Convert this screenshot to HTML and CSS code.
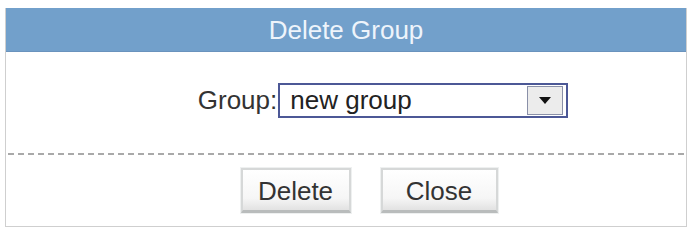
FILE: index.html
```html
<!DOCTYPE html>
<html lang="en">
<head>
    <meta charset="UTF-8">
    <title>Delete Group</title>
    <link rel="stylesheet" href="styles.css">
</head>
<body>
    <div class="dialog">
        <div class="dialog-title">Delete Group</div>

        <div class="form-row">
            <label class="form-label" for="group">Group:</label>
            <div class="select-box" id="group">
                <span class="select-value">new group</span>
                <span class="select-btn">
                    <svg width="12" height="7" viewBox="0 0 12 7"><path d="M0 0 H12 L6 7 Z" fill="#111"/></svg>
                </span>
            </div>
        </div>

        <div class="divider"></div>

        <div class="actions">
            <button class="btn btn-delete">Delete</button>
            <button class="btn btn-close">Close</button>
        </div>
    </div>
</body>
</html>
```

FILE: styles.css
```css
* {
    margin: 0;
    padding: 0;
    box-sizing: border-box;
    font-family: 'Liberation Sans', Arial, sans-serif;
}

body {
    background: #fff;
    width: 690px;
    height: 229px;
    overflow: hidden;
}

.dialog {
    margin: 8px 0 0 5px;
    width: 682px;
    height: 219px;
    border: 1px solid #cfcfcf;
    border-top: none;
    background: #fff;
}

.dialog-title {
    height: 44px;
    background: #72a0cb;
    border-bottom: 1px solid #6a93bd;
    color: #eef4fb;
    font-size: 26px;
    line-height: 44px;
    text-align: center;
}

.form-row {
    display: flex;
    align-items: flex-start;
    justify-content: center;
    padding: 31px 0 0 74px;
    height: 101px;
}

.form-label {
    font-size: 26px;
    color: #333;
    line-height: 35px;
    margin-right: 1px;
}

.select-box {
    display: flex;
    align-items: center;
    width: 290px;
    height: 35px;
    border: 2px solid #4c5896;
    background: #fff;
    padding: 0 3px 0 10px;
}

.select-value {
    flex: 1;
    font-size: 26px;
    color: #222;
}

.select-btn {
    width: 36px;
    height: 29px;
    background: #ececec;
    border: 1px solid #8a90a8;
    display: flex;
    align-items: center;
    justify-content: center;
}

.divider {
    height: 2px;
    margin-left: 2px;
    background: repeating-linear-gradient(90deg, #a9a9a9 0 6px, transparent 6px 10px);
}

.actions {
    display: flex;
    justify-content: center;
    gap: 30px;
    padding: 13px 0 0 46px;
}

.btn {
    height: 45px;
    padding-top: 3px;
    font-size: 26px;
    color: #333;
    background: linear-gradient(#ffffff, #f6f6f6 70%, #e2e2e2);
    border: 2px solid #d6d8d8;
    border-bottom: 3px solid #b9bcbc;
    box-shadow: 0 0 0 1px #eef0f0;
}

.btn-delete {
    width: 110px;
}

.btn-close {
    width: 117px;
}
```
